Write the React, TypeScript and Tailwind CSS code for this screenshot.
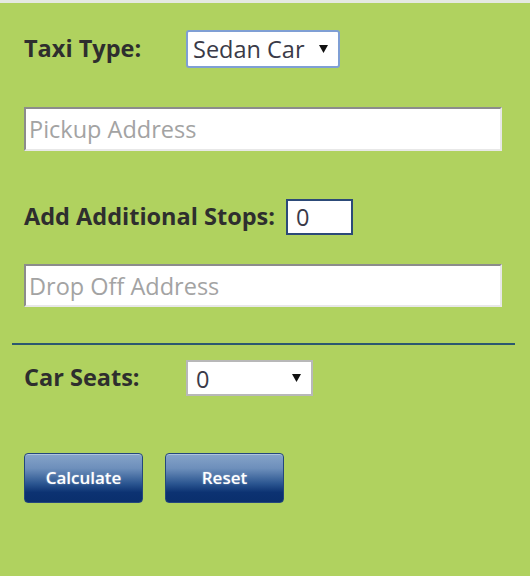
import React from "react";

const font = { fontFamily: "'Open Sans', 'Liberation Sans', sans-serif" };

function Arrow() {
  return (
    <svg className="pointer-events-none absolute right-[12px] top-1/2 -translate-y-1/2" width="9" height="8" viewBox="0 0 9 8">
      <path d="M0 0 L9 0 L4.5 8 Z" fill="#111" />
    </svg>
  );
}

export default function App() {
  return (
    <div
      className="w-[530px] h-[576px] bg-[#b0d25f] border-t-[3px] border-[#e4e9e2] px-6 text-[#2e2e2e]"
      style={font}
    >
      {/* taxi type */}
      <div className="flex items-center mt-[27px]">
        <label className="w-[162px] text-[23.5px] font-bold leading-none">Taxi Type:</label>
        <div className="relative">
          <select
            defaultValue="sedan"
            className="appearance-none w-[154px] h-[38px] bg-white border-2 border-[#7f9fd4] rounded-[3px] pl-[5px] text-[23.5px] text-[#3a3a48] outline-none"
          >
            <option value="sedan">Sedan Car</option>
            <option value="suv">SUV</option>
            <option value="van">Van</option>
          </select>
          <Arrow />
        </div>
      </div>

      <input
        placeholder="Pickup Address"
        className="block mt-[39px] w-[478px] h-[44px] bg-white border-2 border-t-[#8c8c8c] border-l-[#8c8c8c] border-r-[#e8e8e8] border-b-[#e8e8e8] px-[3px] text-[23.5px] placeholder:text-[#a3a3a3] outline-none"
      />

      {/* stops */}
      <div className="flex items-center mt-[48px]">
        <label className="text-[23.5px] font-bold leading-none mr-[11px]">Add Additional Stops:</label>
        <input
          defaultValue="0"
          className="w-[67px] h-[36px] bg-white border-2 border-[#2c4a78] px-[8px] text-[23.5px] text-[#3a3a48] outline-none"
        />
      </div>

      <input
        placeholder="Drop Off Address"
        className="block mt-[29px] w-[478px] h-[43px] bg-white border-2 border-t-[#8c8c8c] border-l-[#8c8c8c] border-r-[#e8e8e8] border-b-[#e8e8e8] px-[3px] text-[23.5px] placeholder:text-[#a3a3a3] outline-none"
      />

      <div className="mt-[36px] -ml-3 w-[503px] h-[2px] bg-[#2b5870]" />

      {/* car seats */}
      <div className="flex items-center mt-[15px]">
        <label className="w-[162px] text-[23.5px] font-bold leading-none">Car Seats:</label>
        <div className="relative">
          <select
            defaultValue="0"
            className="appearance-none w-[127px] h-[36px] bg-white border-2 border-[#b8b8b8] pl-[8px] text-[23.5px] text-[#3a3a48] outline-none"
          >
            <option value="0">0</option>
            <option value="1">1</option>
            <option value="2">2</option>
            <option value="3">3</option>
          </select>
          <Arrow />
        </div>
      </div>

      {/* buttons */}
      <div className="flex gap-[22px] mt-[57px]">
        {["Calculate", "Reset"].map((b) => (
          <button
            key={b}
            className="w-[119px] h-[50px] rounded-[4px] border border-[#24487c] bg-[linear-gradient(to_bottom,#86a4c9_0%,#6d8fbb_30%,#2a5590_62%,#0c3272_80%,#0a2f6d_100%)] text-white text-[17px] font-semibold [text-shadow:0_0_2px_rgba(255,255,255,0.4)] shadow-[inset_0_1px_0_rgba(255,255,255,0.35)]"
          >
            {b}
          </button>
        ))}
      </div>
    </div>
  );
}
